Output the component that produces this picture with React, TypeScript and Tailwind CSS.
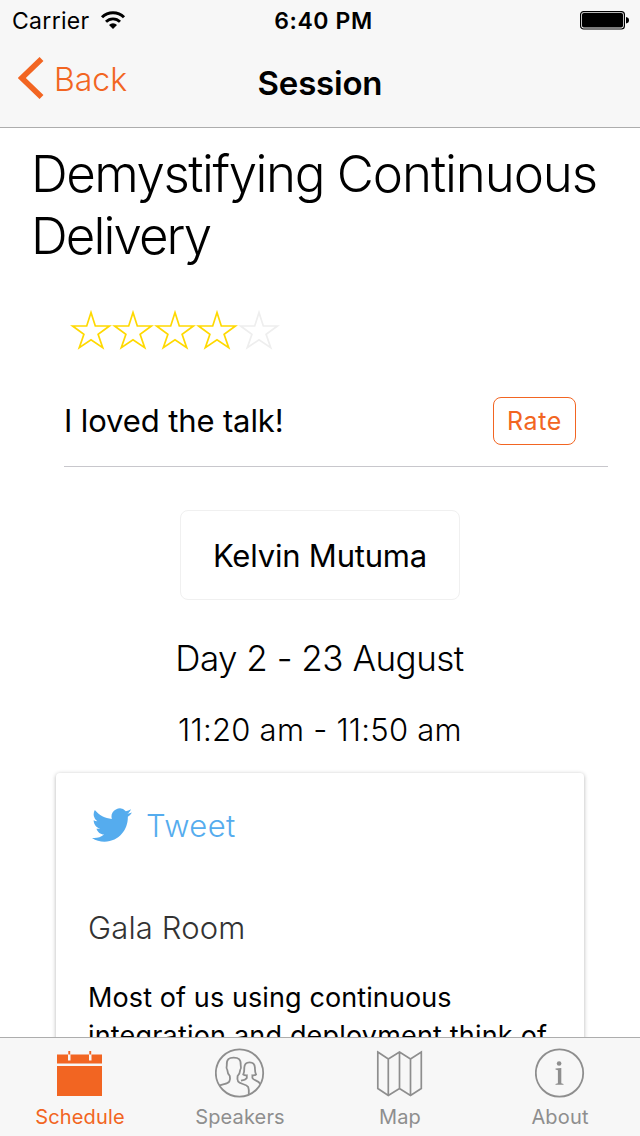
import type { ReactNode } from "react";

const STAR = "M21 3.6 L25.3 17 H39.4 L28.1 25.300 L32.700 38.700 L21 30.800 L9.300 38.700 L13.9 25.300 L2.6 17 H16.7 Z";

function Star({ filled }: { filled: boolean }) {
  return (
    <svg viewBox="0 0 42 42" className={`h-[42px] w-[42px] ${filled ? "text-[#ffd900]" : "text-[#eeeeee]"}`}>
      <path d={STAR} fill="none" stroke="currentColor" strokeWidth="1.7" />
    </svg>
  );
}

function StatusBar() {
  return (
    <div className="grid h-[42px] grid-cols-3 items-center text-[23px] leading-[42px]">
      <div className="flex items-center gap-[10px] pl-[12px]">
        <span className="tracking-[0.3px]">Carrier</span>
        <svg viewBox="0 0 26 20" className="h-[20px] w-[26px]">
          <path d="M2 6.200 A15.6 15.6 0 0 1 24 6.200" fill="none" stroke="black" strokeWidth="3" />
          <path d="M6 10.800 A9.8 9.8 0 0 1 20 10.800" fill="none" stroke="black" strokeWidth="2.8" />
          <path d="M9 14 A5.6 5.6 0 0 1 17 14 L13 18 Z" fill="black" />
        </svg>
      </div>
      <div className="pl-[7px] text-center font-semibold tracking-[0.6px]">6:40 PM</div>
      <div className="flex justify-end pr-[10px] pb-0.5">
        <svg viewBox="0 0 50 20" className="h-[20px] w-[50px]">
          <rect x="0.6" y="1.6" width="43.8" height="17.4" rx="3" fill="none" stroke="black" strokeWidth="1.2" />
          <rect x="2" y="3" width="41" height="14.6" rx="1.8" fill="black" />
          <path d="M46 7 Q49 7.6 49 10.3 Q49 13 46 13.6 Z" fill="black" />
        </svg>
      </div>
    </div>
  );
}

function NavBar() {
  return (
    <div className="grid h-[85px] grid-cols-3">
      <div className="flex h-[76px] items-center gap-[10px] pl-[18px] text-[32px] font-light text-[#f26522]">
        <svg viewBox="0 0 26 42" className="mb-[4px] h-[42px] w-[26px]">
          <path d="M23.5 2 L3.800 21 L23.5 40" fill="none" stroke="currentColor" strokeWidth="5.6" />
        </svg>
        <span>Back</span>
      </div>
      <div className="flex h-[83px] items-center justify-center text-[33px] font-semibold tracking-[-0.2px]">Session</div>
    </div>
  );
}

function Tab({ label, active, children }: { label: string; active?: boolean; children: ReactNode }) {
  return (
    <div className={`flex flex-1 flex-col items-center pt-[10px] ${active ? "text-[#f26522]" : "text-[#8e8e8e]"}`}>
      <svg viewBox="0 0 50 50" className="h-[50px] w-[50px]">
        {children}
      </svg>
      <span className="mt-[7px] text-[20px] leading-[24px] tracking-[0.15px]">{label}</span>
    </div>
  );
}

export default function App() {
  return (
    <div className="flex h-[1136px] w-[640px] flex-col overflow-hidden bg-white font-[Inter,sans-serif] text-black">
      <header className="shrink-0 border-b border-[#adadad] bg-[#f7f7f7]">
        <StatusBar />
        <NavBar />
      </header>

      <main className="min-h-0 flex-1 overflow-hidden pt-[15px]">
        <h1 className="pl-[31px] text-[51px] leading-[62px] font-light whitespace-nowrap">
          <span className="tracking-[-1.45px]">Demystifying </span>
          <span className="tracking-[-1.1px]">Continuous</span>
          <br />
          <span className="tracking-[-1.9px]">Delivery</span>
        </h1>

        <div className="mt-[42px] flex pl-[70px]">
          {[1, 2, 3, 4, 5].map((n) => (
            <Star key={n} filled={n <= 4} />
          ))}
        </div>

        <div className="mt-[46px] mr-[32px] ml-[64px] flex h-[70px] items-start justify-between border-b border-[#c8c7cc] pr-[32px]">
          <p className="text-[31px] leading-[48px] tracking-[-0.12px]">I loved the talk!</p>
          <button className="h-[48px] w-[83px] rounded-[8px] border border-[#f26522] text-[25px] leading-[46px] tracking-[0.6px] text-[#f26522]">
            Rate
          </button>
        </div>

        <div className="mx-auto mt-[43px] flex h-[90px] w-[280px] items-center justify-center rounded-[8px] border border-[#f0f0f0] pt-[2px] text-[31px] tracking-[-0.2px]">
          Kelvin Mutuma
        </div>

        <p className="mt-[38px] pr-px text-center text-[35px] leading-[40px] font-light tracking-[-0.5px]">Day 2 - 23 August</p>
        <p className="mt-[32px] text-center text-[31px] leading-[40px] font-light tracking-[0.25px]">11:20 am - 11:50 am</p>

        <section className="mx-auto mt-[23px] h-[320px] w-[528px] rounded-[4px] bg-white px-[32px] shadow-[0_1px_4px_rgba(0,0,0,0.3)]">
          <div className="flex items-center gap-[14px] pt-[33px] pl-[4px] text-[#55acee]">
            <svg viewBox="0 0 24 20" className="mb-[3px] h-[34px] w-[40px]" preserveAspectRatio="none">
              <path
                fill="currentColor"
                d="M24 2.6c-.9.4-1.8.7-2.8.8 1-.6 1.8-1.6 2.2-2.7-1 .6-2 1-3.1 1.2A4.9 4.9 0 0 0 11.9 6.400C7.800 6.200 4.200 4.200 1.700 1.200a4.900 4.900 0 0 0 1.500 6.600c-.8 0-1.600-.2-2.200-.6v.1c0 2.300 1.700 4.300 3.900 4.800-.7.2-1.500.2-2.200.1.6 2 2.400 3.400 4.600 3.400A9.900 9.900 0 0 1 0 17.600 14 14 0 0 0 7.500 19.800c9.100 0 14-7.500 14-14v-.6c1-.7 1.800-1.600 2.500-2.600z"
              />
            </svg>
            <span className="text-[31px] leading-[40px] font-light tracking-[0.4px]">Tweet</span>
          </div>
          <p className="mt-[62px] text-[31px] leading-[40px] font-light tracking-[0.15px] text-[#333333]">Gala Room</p>
          <p className="mt-[31px] text-[27px] leading-[38px] whitespace-nowrap">
            <span className="tracking-[0.1px]">Most of us using continuous</span>
            <br />
            <span className="tracking-[0.18px]">integration and deployment think of</span>
          </p>
        </section>
      </main>

      <nav className="flex h-[99px] shrink-0 border-t border-[#adadad] bg-[#f7f7f7]">
        <Tab label="Schedule" active>
          <path
            fill="currentColor"
            d="M2 6.500H13V12.500H15.500V6.500H34V12.500H36.500V6.500H47V15.500H2Z M2 18H47V48H2Z M13.300 3H15.200V6.500H13.300Z M34.300 3H36.200V6.500H34.300Z"
          />
        </Tab>
        <Tab label="Speakers">
          <g fill="none" stroke="currentColor" strokeWidth="1.8">
            <circle cx="24.500" cy="25" r="23.700" />
            <path d="M4.500 37.500C8 35.500 12.500 36.500 14.300 33.500Q15.500 30.500 14.800 28Q12.500 25.500 12.300 22Q11 20.500 11.800 17C11.500 11 14 9.700 18.700 9.700C23.400 9.700 26 11 25.700 17Q26.500 20.500 25.200 22Q25 25.500 22.600 28Q22 31 23.100 33.500C25 36.500 31 35.500 33.200 39Q34.300 42 33.800 46.500" />
            <path d="M26 32.700Q30.500 32 31.800 30V27.300Q29.500 27.500 28.300 26.500C29.500 24 29.200 22 29.300 19.500C29.500 15.500 31.500 14.300 34.600 14.300C37.700 14.300 39.700 15.500 39.900 19.500C40 22 39.800 24 41 26.500Q39.700 27.500 37.400 27.300V30C38.500 32.700 43.500 32 45.200 36" />
          </g>
        </Tab>
        <Tab label="Map">
          <path
            d="M2.800 4L13.300 11L24.500 4L35.500 11L46.300 4V40.500L35.500 47.500L24.500 40.500L13.300 47.500L2.800 40.500ZM13.300 11V47.500M24.500 4V40.500M35.500 11V47.500"
            fill="none"
            stroke="currentColor"
            strokeWidth="1.700"
          />
        </Tab>
        <Tab label="About">
          <circle cx="24.500" cy="25" r="23.700" fill="none" stroke="currentColor" strokeWidth="1.800" />
          <circle cx="24.100" cy="15.500" r="2.300" fill="currentColor" />
          <path fill="currentColor" d="M20.500 20.600L26.300 20V35.300L28.500 35.900V36.800H20.500V35.900L22.900 35.300V22.200L20.500 21.600Z" />
        </Tab>
      </nav>
    </div>
  );
}
